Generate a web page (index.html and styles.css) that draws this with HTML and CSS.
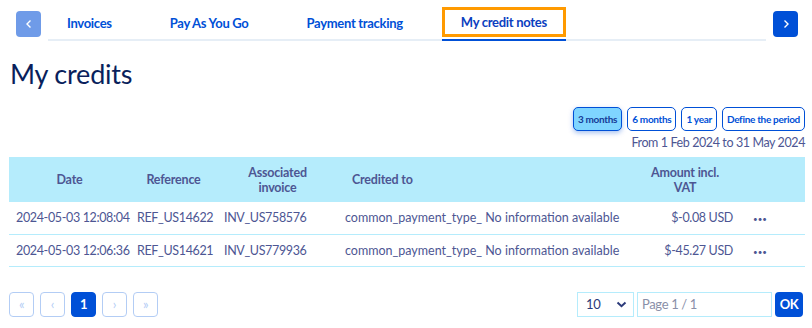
FILE: index.html
```html
<!DOCTYPE html>
<html lang="en">
<head>
<meta charset="utf-8">
<title>My credits</title>
<link rel="stylesheet" href="styles.css">
</head>
<body>
<div class="tabs-bar">
  <button class="nav-btn nav-btn--disabled" aria-label="Previous">
    <svg width="8" height="10" viewBox="0 0 8 10"><path d="M5.5 1.5 2 5l3.5 3.5" fill="none" stroke="#fff" stroke-width="1.4"/></svg>
  </button>
  <nav class="tab-list">
    <a class="tab">Invoices</a>
    <a class="tab">Pay As You Go</a>
    <a class="tab">Payment tracking</a>
    <a class="tab tab--active"><span class="tab-focus">My credit notes</span></a>
  </nav>
  <button class="nav-btn" aria-label="Next">
    <svg width="8" height="10" viewBox="0 0 8 10"><path d="M2.5 1.5 6 5 2.5 8.5" fill="none" stroke="#fff" stroke-width="1.4"/></svg>
  </button>
</div>

<main class="content">
  <h1 class="title">My credits</h1>

  <div class="period">
    <div class="period-buttons">
      <button class="chip chip--active">3 months</button>
      <button class="chip">6 months</button>
      <button class="chip">1 year</button>
      <button class="chip">Define the period</button>
    </div>
    <div class="period-range">From 1 Feb 2024 to 31 May 2024</div>
  </div>

  <table class="grid">
    <colgroup>
      <col class="c-date"><col class="c-ref"><col class="c-inv"><col class="c-cred"><col class="c-amt"><col class="c-act">
    </colgroup>
    <thead>
      <tr>
        <th>Date</th>
        <th>Reference</th>
        <th>Associated<br>invoice</th>
        <th class="th-left">Credited to</th>
        <th>Amount incl.<br>VAT</th>
        <th></th>
      </tr>
    </thead>
    <tbody>
      <tr>
        <td>2024-05-03 12:08:04</td>
        <td>REF_US14622</td>
        <td>INV_US758576</td>
        <td class="cred">common_payment_type_ No information available</td>
        <td class="amt">$-0.08 USD</td>
        <td class="act"><span class="dots">•••</span></td>
      </tr>
      <tr>
        <td>2024-05-03 12:06:36</td>
        <td>REF_US14621</td>
        <td>INV_US779936</td>
        <td class="cred">common_payment_type_ No information available</td>
        <td class="amt">$-45.27 USD</td>
        <td class="act"><span class="dots">•••</span></td>
      </tr>
    </tbody>
  </table>

  <div class="footer">
    <div class="pager">
      <button class="pg">«</button>
      <button class="pg">‹</button>
      <button class="pg pg--active">1</button>
      <button class="pg">›</button>
      <button class="pg">»</button>
    </div>
    <div class="page-ctrl">
      <div class="select">
        <span>10</span>
        <svg width="11" height="7" viewBox="0 0 11 7"><path d="M1.5 1.5 5.5 5.2 9.5 1.5" fill="none" stroke="#2b3a7a" stroke-width="2"/></svg>
      </div>
      <div class="page-input">Page 1 / 1</div>
      <button class="ok">OK</button>
    </div>
  </div>
</main>
</body>
</html>
```

FILE: styles.css
```css
* { box-sizing: border-box; }

body {
  margin: 0;
  font-family: "Lato", "Liberation Sans", sans-serif;
  color: #4d5693;
  background: #fff;
  letter-spacing: -0.35px;
}

button {
  font-family: inherit;
  letter-spacing: inherit;
  cursor: pointer;
}

.tabs-bar {
  display: flex;
  align-items: flex-start;
  gap: 7px;
  padding: 7px 14px 0 16px;
}

.nav-btn {
  width: 25px;
  height: 26px;
  margin-top: 4px;
  border: 0;
  border-radius: 4px;
  background: #0050d7;
  display: flex;
  align-items: center;
  justify-content: center;
  padding: 0;
}

.nav-btn--disabled {
  background: #6f9be8;
}

.tab-list {
  flex: 1;
  display: flex;
  gap: 20px;
  height: 34px;
  border-bottom: 2px solid #e6eef6;
}

.tab {
  display: flex;
  align-items: center;
  height: 34px;
  padding: 0 19px 3px;
  font-size: 13px;
  font-weight: 700;
  letter-spacing: -0.3px;
  color: #0050d7;
  white-space: nowrap;
}

.tab--active {
  padding: 0 0 2px;
  margin-bottom: -2px;
  height: 34px;
  border-bottom: 2px solid #0050d7;
  align-items: stretch;
}

.tab-focus {
  display: flex;
  align-items: center;
  padding: 0 16px;
  border: 3px solid #ff9a00;
  color: #0b40c0;
}

.content {
  padding: 0 7px 0 9px;
}

.title {
  margin: 16px 0 0 1px;
  font-size: 27px;
  font-weight: 400;
  line-height: 34px;
  letter-spacing: -0.2px;
  color: #0a1f5c;
}

.period {
  display: flex;
  flex-direction: column;
  align-items: flex-end;
  margin-top: 16px;
}

.period-buttons {
  display: flex;
  gap: 5px;
}

.chip {
  height: 24px;
  padding: 0 4px;
  border: 1px solid #0050d7;
  border-radius: 5px;
  background: #fff;
  color: #0050d7;
  font-size: 10px;
  font-weight: 700;
  letter-spacing: -0.3px;
}

.chip--active {
  background: #7fd5ff;
  color: #163b97;
  box-shadow: 0 2px 5px rgba(0, 80, 215, 0.35);
}

.period-range {
  margin-top: 3px;
  font-size: 12.5px;
  line-height: 17px;
  letter-spacing: -0.4px;
  color: #4d5693;
}

.grid {
  width: 796px;
  margin-top: 6px;
  border-collapse: collapse;
  table-layout: fixed;
  font-size: 12.5px;
}

.c-date { width: 121px; }
.c-ref { width: 87px; }
.c-inv { width: 121px; }
.c-cred { width: 292px; }
.c-amt { width: 110px; }
.c-act { width: 65px; }

.grid thead tr {
  background: #b5ecfc;
  height: 45px;
}

.grid th {
  font-size: 12.5px;
  font-weight: 700;
  line-height: 15px;
  letter-spacing: -0.2px;
  text-align: center;
  color: #4d5693;
  padding: 0;
}

.grid th.th-left {
  text-align: left;
  padding-left: 14px;
}

.grid tbody tr {
  height: 32px;
  border-bottom: 1px solid #b5ecfc;
}

.grid td {
  padding: 0 0 0 7px;
  white-space: nowrap;
  color: #4d5693;
}

.grid td.cred {
  letter-spacing: 0;
}

.grid td.amt {
  text-align: right;
  padding: 0 7px 0 0;
}

.grid td.act {
  padding-left: 13px;
}

.dots {
  font-size: 8px;
  letter-spacing: 0;
  color: #4d5693;
}

.footer {
  display: flex;
  justify-content: space-between;
  align-items: center;
  margin-top: 25px;
}

.pager {
  display: flex;
  gap: 6px;
}

.pg {
  width: 25px;
  height: 25px;
  padding: 0;
  border: 1px solid #b3cdf5;
  border-radius: 4px;
  background: #fff;
  color: #b3cdf5;
  font-size: 13px;
  line-height: 1;
}

.pg--active {
  background: #0050d7;
  border-color: #0050d7;
  color: #fff;
  font-weight: 700;
}

.page-ctrl {
  display: flex;
  gap: 3px;
  margin-right: 2px;
}

.select {
  width: 57px;
  height: 25px;
  border: 1px solid #b5ecfc;
  display: flex;
  align-items: center;
  justify-content: space-between;
  padding: 0 6px 0 8px;
  font-size: 13px;
  color: #2b3a7a;
}

.page-input {
  width: 135px;
  height: 25px;
  border: 1px solid #b5ecfc;
  display: flex;
  align-items: center;
  padding: 0 4px;
  font-size: 13px;
  color: #8a8fa8;
}

.ok {
  width: 28px;
  height: 25px;
  padding: 0;
  border: 0;
  border-radius: 4px;
  background: #0050d7;
  color: #fff;
  font-size: 13px;
  font-weight: 700;
}
```
